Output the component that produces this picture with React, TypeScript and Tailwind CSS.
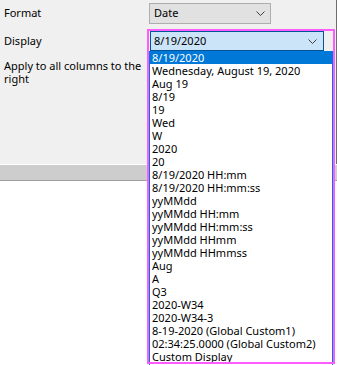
import React from "react";

const options = [
  "8/19/2020",
  "Wednesday, August 19, 2020",
  "Aug 19",
  "8/19",
  "19",
  "Wed",
  "W",
  "2020",
  "20",
  "8/19/2020 HH:mm",
  "8/19/2020 HH:mm:ss",
  "yyMMdd",
  "yyMMdd HH:mm",
  "yyMMdd HH:mm:ss",
  "yyMMdd HHmm",
  "yyMMdd HHmmss",
  "Aug",
  "A",
  "Q3",
  "2020-W34",
  "2020-W34-3",
  "8-19-2020 (Global Custom1)",
  "02:34:25.0000 (Global Custom2)",
  "Custom Display",
];

function Chevron() {
  return (
    <svg width="9" height="5" viewBox="0 0 9 5" className="shrink-0">
      <path d="M0.5 0.5 L4.5 4.5 L8.5 0.5" fill="none" stroke="#404040" strokeWidth="1" />
    </svg>
  );
}

export default function App() {
  return (
    <div className="relative w-[337px] h-[365px] overflow-hidden bg-white text-[11px] text-black font-['Noto_Sans',sans-serif]">
      {/* settings panel */}
      <div className="h-[164px] bg-[#f0f0f0] border-r border-[#6d6d6d] pt-[3px]">
        <div className="flex items-center h-[21px]">
          <span className="w-[149px] pl-[4px]">Format</span>
          <div className="flex items-center justify-between w-[122px] h-[21px] px-[4px] pr-[5px] bg-[#e1e1e1] border border-[#adadad]">
            <span>Date</span>
            <Chevron />
          </div>
        </div>
        <div className="flex items-center h-[20px] mt-[7px]">
          <span className="w-[150px] pl-[4px]">Display</span>
          <div className="flex items-center justify-between w-[174px] h-[20px] pl-[3px] pr-[6px] bg-[#cce4f7] border border-[#005499]">
            <span>8/19/2020</span>
            <Chevron />
          </div>
        </div>
        <div className="w-[145px] pl-[4px] mt-[8px] leading-[13px]">Apply to all columns to the right</div>
      </div>
      <div className="h-[17px] bg-[#cdcdcd] border-t border-white border-b border-b-[#a0a0a0]" />

      {/* open dropdown list */}
      <div className="absolute left-[149px] top-[51px] w-[184px] h-[320px] bg-white border-x border-[#0078d7]">
        {options.map((o, i) => (
          <div
            key={o}
            className={`h-[13px] leading-[13px] pl-[2px] whitespace-nowrap ${i === 0 ? "bg-[#0078d7] text-white" : ""}`}
          >
            {o}
          </div>
        ))}
      </div>

      {/* highlight frame */}
      <div className="absolute left-[147px] top-[29px] w-[188px] h-[335px] border-2 border-[#ff5cff] pointer-events-none" />
    </div>
  );
}
